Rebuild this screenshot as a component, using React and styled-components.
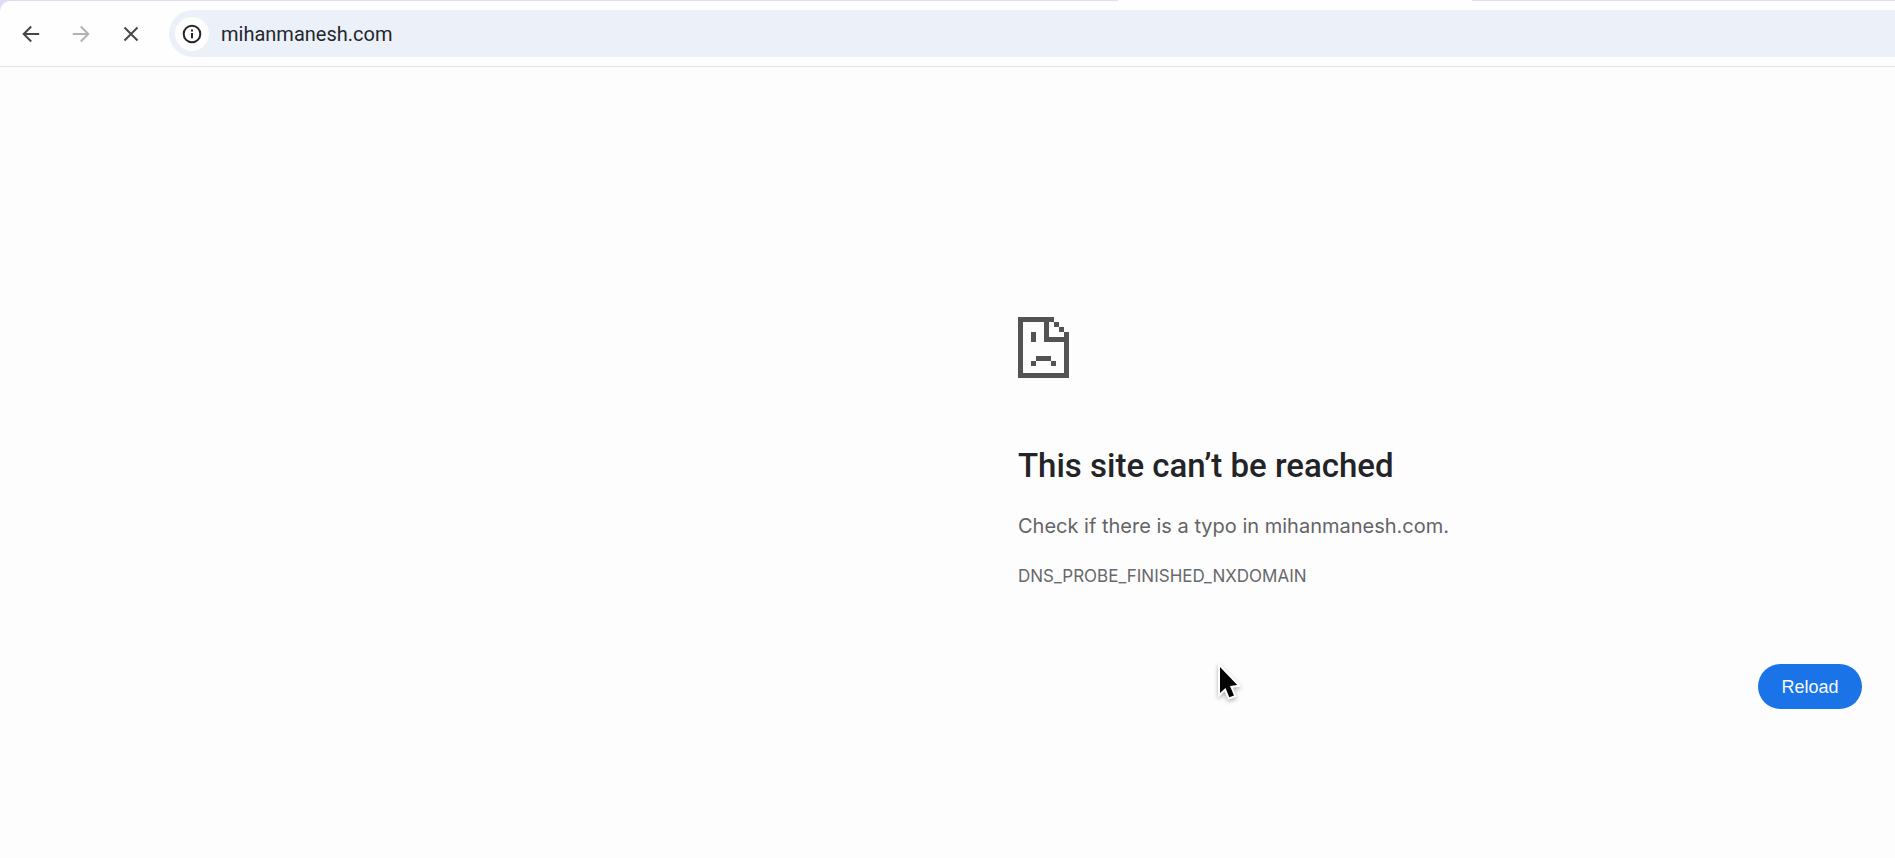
import React from "react";
import styled, { createGlobalStyle } from "styled-components";

const GlobalStyle = createGlobalStyle`
  *, *::before, *::after { box-sizing: border-box; }
  body {
    margin: 0;
    background: #fdfdfd;
    font-family: Inter, "Liberation Sans", sans-serif;
    overflow: hidden;
  }
`;

const Window = styled.div`
  position: relative;
  min-height: 100vh;
  display: flex;
  flex-direction: column;
`;

const Chrome = styled.header`
  background: #dcdff6;
`;

const TabStrip = styled.div`
  height: 1px;
  display: flex;
  padding-left: 59%;
`;

const ActiveTab = styled.div`
  width: 354px;
  background: #fefefe;
`;

const Toolbar = styled.nav`
  display: flex;
  align-items: center;
  height: 66px;
  padding: 1px 0 1px 12px;
  background: #fefefe;
  border-bottom: 1px solid #e2e3e6;
  border-top-left-radius: 10px;
`;

const NavButtons = styled.div`
  display: flex;
  gap: 12px;
  margin-right: 19px;
`;

const NavButton = styled.button`
  display: grid;
  place-items: center;
  width: 38px;
  height: 40px;
  padding: 0;
  border: 0;
  border-radius: 50%;
  background: none;
  color: ${(p) => (p.disabled ? "#b1b2b3" : "#474747")};
`;

const AddressBar = styled.div`
  flex: 1;
  display: flex;
  align-items: center;
  gap: 12px;
  height: 47px;
  padding-left: 6px;
  background: #ebf0f9;
  border-radius: 24px 0 0 24px;
`;

const SiteInfo = styled.button`
  display: grid;
  place-items: center;
  width: 34px;
  height: 34px;
  padding: 0;
  border: 0;
  border-radius: 50%;
  background: #fefefe;
  color: #242528;
`;

const UrlInput = styled.input`
  flex: 1;
  min-width: 0;
  height: 40px;
  padding: 0;
  border: 0;
  outline: 0;
  background: none;
  color: #24272d;
  font: 400 20px/24px Roboto, "Liberation Sans", sans-serif;
`;

const Page = styled.main`
  flex: 1;
  padding: 250px 33px 32px;
`;

const ErrorPanel = styled.section`
  max-width: 844px;
  margin-left: auto;
  display: flex;
  flex-direction: column;
`;

const Title = styled.h1`
  margin: 68px 0 0;
  color: #232427;
  font-family: Roboto, "Liberation Sans", sans-serif;
  font-size: 33px;
  font-weight: 500;
  line-height: 40px;
`;

const Summary = styled.p`
  margin: 24px 0 0;
  color: #636466;
  font-size: 20px;
  line-height: 32px;
`;

const ErrorCode = styled.p`
  margin: 24px 0 0;
  color: #68696b;
  font-size: 17px;
  line-height: 20px;
`;

const ReloadButton = styled.button`
  align-self: flex-end;
  width: 104px;
  height: 45px;
  margin-top: 78px;
  padding: 0;
  border: 0;
  border-radius: 24px;
  background: #1b73e8;
  color: #f4f9ff;
  font: 400 18px/24px "Liberation Sans", Arial, sans-serif;
`;

const Pointer = styled.svg`
  position: absolute;
  left: 1216px;
  top: 663px;
  overflow: visible;
  pointer-events: none;
  filter: drop-shadow(0 2px 2px rgba(0, 0, 0, 0.3));
`;

const lineProps = { fill: "none", stroke: "currentColor", strokeWidth: 2, "aria-hidden": true };

function BackIcon() {
  return (
    <svg width="18" height="18" viewBox="0 0 18 18" {...lineProps}>
      <path d="M17.2 9H2M9.2 1.5L1.7 9l7.5 7.5" />
    </svg>
  );
}

function ForwardIcon() {
  return (
    <svg width="18" height="18" viewBox="0 0 18 18" {...lineProps}>
      <path d="M.8 9H16M8.8 1.5L16.3 9l-7.5 7.5" />
    </svg>
  );
}

function StopIcon() {
  return (
    <svg width="16" height="16" viewBox="0 0 16 16" {...lineProps}>
      <path d="M1.5 1.5l13 13M14.5 1.5l-13 13" />
    </svg>
  );
}

function InfoIcon() {
  return (
    <svg width="20" height="20" viewBox="0 0 20 20" {...lineProps}>
      <circle cx="10" cy="10" r="8.3" />
      <path d="M10 9v5.2M10 5.6v2" />
    </svg>
  );
}

function SadPageIcon() {
  return (
    <svg width="51" height="61" viewBox="0 0 10 12" preserveAspectRatio="none" fill="#535355" shapeRendering="crispEdges" aria-hidden="true">
      <path d="M0 0H7V.95H6.1V3.95H9.1V3H10V12H0zM.95 .95V11.05H9.05V4.9H5.15V.95z" fillRule="evenodd" />
      <path d="M7 1h1v1h1v1H8V2H7z" />
      <path d="M2.5 3h1v2h-1zM3.5 7.7h3v1h-3zM2.5 8.7h1v1h-1zM6.5 8.7h1v1h-1z" />
    </svg>
  );
}

export default function App() {
  return (
    <Window>
      <GlobalStyle />
      <Chrome>
        <TabStrip>
          <ActiveTab />
        </TabStrip>
        <Toolbar aria-label="Browser">
          <NavButtons>
            <NavButton aria-label="Back"><BackIcon /></NavButton>
            <NavButton aria-label="Forward" disabled><ForwardIcon /></NavButton>
            <NavButton aria-label="Stop loading"><StopIcon /></NavButton>
          </NavButtons>
          <AddressBar>
            <SiteInfo aria-label="View site information"><InfoIcon /></SiteInfo>
            <UrlInput aria-label="Address" defaultValue="mihanmanesh.com" spellCheck={false} />
          </AddressBar>
        </Toolbar>
      </Chrome>
      <Page>
        <ErrorPanel>
          <SadPageIcon />
          <Title>This site can’t be reached</Title>
          <Summary>Check if there is a typo in mihanmanesh.com.</Summary>
          <ErrorCode>DNS_PROBE_FINISHED_NXDOMAIN</ErrorCode>
          <ReloadButton>Reload</ReloadButton>
        </ErrorPanel>
      </Page>
      <Pointer width="24" height="36" viewBox="0 0 24 36" aria-hidden="true">
        <path d="M4 4V30l5.5-5 3.8 9.3 4.7-1.8-4-9.5 7.3-1z" fill="#050505" stroke="#fff" strokeWidth="4" paintOrder="stroke" />
      </Pointer>
    </Window>
  );
}
